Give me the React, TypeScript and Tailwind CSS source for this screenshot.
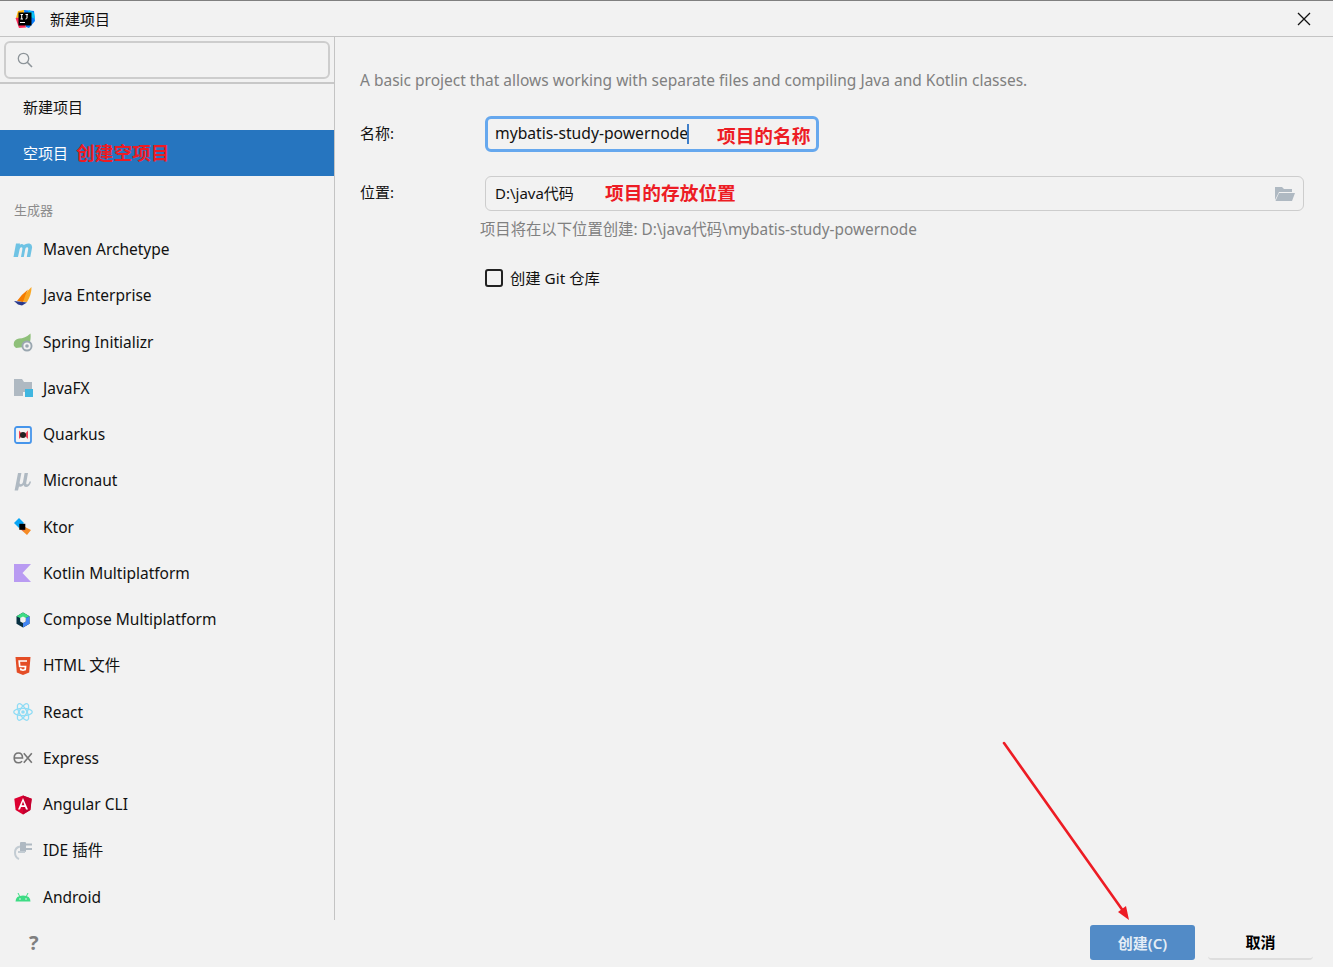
import React from "react";

const font = { fontFamily: '"Noto Sans","Noto Sans CJK SC",sans-serif' };

const Ico = ({ children }: { children: React.ReactNode }) => (
  <svg width="20" height="20" viewBox="0 0 20 20" className="shrink-0">{children}</svg>
);

const items: [string, React.ReactNode][] = [
  ["Maven Archetype", <Ico><path d="M0.5 17 L3 3.5 H7 L6.8 4.8 Q9 3 10.8 5 Q13.5 3 16.5 3.6 Q19.6 4.5 19 8 L17.3 17 H13.8 L15.2 9 Q15.4 7.2 14 7.2 Q12.6 7.2 12.3 9 L10.8 17 H8 L9.4 9 Q9.6 7.2 8.4 7.2 Q7 7.2 6.7 9 L5 17 Z" fill="#6fc3e4" /></Ico>],
  ["Java Enterprise", <Ico><path d="M18.5 1 Q18.5 9 14 16 L8 15.5 Q12 7 18.5 1Z" fill="#f9a825" /><path d="M15 3.5 Q9 8 4 15 L10 16 Q12 9 15 3.5Z" fill="#f57c00" /><path d="M1 15 L14 16.5 L9 19.5 L5 18.4Z" fill="#2a3a8c" /></Ico>],
  ["Spring Initializr", <Ico><path d="M1 14 Q-0.5 8 6 6.5 Q12 6.5 17.5 1.5 Q18 6 17 10 L11 15 L3 16Z" fill="#8fc07a" /><circle cx="14" cy="14" r="5.5" fill="#9aa7b0" /><circle cx="14" cy="14" r="3.6" fill="#f2f2f2" /><circle cx="14" cy="14" r="1.8" fill="#9aa7b0" /></Ico>],
  ["JavaFX", <Ico><path d="M1 1 H9 L11 4 H19 V14 H10 V18 H1Z" fill="#afb9c2" /><rect x="12" y="11" width="8" height="8" fill="#40b6e0" /></Ico>],
  ["Quarkus", <Ico><rect x="2" y="2" width="16" height="16" rx="2" fill="none" stroke="#4695eb" strokeWidth="1.8" /><path d="M3 10 L10 3 L17 10 L10 17Z" fill="#f2f2f2" /><path d="M6 5.5 L10 10 L6 14Z" fill="#ef4056" /><path d="M15 5.5 L11 10 L15 14Z" fill="#ef4056" /><circle cx="10" cy="10" r="3" fill="#222" /></Ico>],
  ["Micronaut", <Ico><path d="M5 2 H8.4 L6.6 11.5 Q6.4 13.5 8 13.3 Q9.6 13 10 11 L11.6 2 H15 L13.2 12 Q13 13.4 14 13.4 Q15.6 13.4 17 10 L18 11 Q16.5 16 13 16 Q11 16 10.6 14 Q8.5 16.5 6 15.4 L5 19.5 H1.6Z" fill="#afb9c2" /></Ico>],
  ["Ktor", <Ico><path d="M1 6 L6 1 L11 6 L6 11Z" fill="#08a5f5" /><path d="M9 8 L13 10.5 L18 13 L14 18 L6 11Z" fill="#f58a25" /><path d="M7 8 L12 8 L12 12 L10 14Z" fill="#d0457f" /><rect x="6.3" y="6.8" width="6" height="6" fill="#000" /></Ico>],
  ["Kotlin Multiplatform", <Ico><path d="M1 1 H18 L9.5 10 L18 19 H1Z" fill="#b99bf2" /></Ico>],
  ["Compose Multiplatform", <Ico><path d="M10 2.5 L16.5 6.2 V13.8 L10 17.5 L3.5 13.8 V6.2Z" fill="#083042" /><path d="M3.5 6.2 L10 2.5 L16.5 6.2 L10 9.5Z" fill="#3ddc84" /><path d="M16.5 6.2 V13.8 L10 17.5 V13 L13 11.5 V8Z" fill="#4285f4" /><path d="M7.2 8 L10 6.5 L12.8 8 V11.5 L10 13 L7.2 11.5Z" fill="#f2f2f2" /></Ico>],
  ["HTML 文件", <Ico><path d="M2.5 1 H17.5 L16.2 16.5 L10 19 L3.8 16.5Z" fill="#e44d26" /><path d="M14 5 H6.2 L6.7 10.5 H12.5 L12.2 13.5 L10 14.2 L7.8 13.5 L7.7 12.3" fill="none" stroke="#fff" strokeWidth="1.7" /></Ico>],
  ["React", <Ico><g fill="none" stroke="#8fdcf5" strokeWidth="1.3"><ellipse cx="10" cy="10" rx="9.3" ry="3.7" /><ellipse cx="10" cy="10" rx="9.3" ry="3.7" transform="rotate(60 10 10)" /><ellipse cx="10" cy="10" rx="9.3" ry="3.7" transform="rotate(120 10 10)" /></g><circle cx="10" cy="10" r="1.8" fill="#8fdcf5" /></Ico>],
  ["Express", <Ico><g fill="none" stroke="#757575" strokeWidth="1.6"><path d="M1.5 10 H9.5 Q9.5 5 5.5 5 Q1.2 5 1.2 10 Q1.2 14.8 5.5 14.8 Q8 14.8 9 13.2" /><path d="M10.8 5.2 L18.8 14.8 M18.8 5.2 L10.8 14.8" /></g></Ico>],
  ["Angular CLI", <Ico><path d="M10 0.5 L18.7 3.7 L17.4 15 L10 19.5 L2.6 15 L1.3 3.7Z" fill="#dd0031" /><path d="M10 0.5 L18.7 3.7 L17.4 15 L10 19.5Z" fill="#c3002f" /><path d="M10 3 L5 14.5 H7 L8 12 H12 L13 14.5 H15 Z M10 6.5 L11.4 10.2 H8.6Z" fill="#fff" fillRule="evenodd" /></Ico>],
  ["IDE 插件", <Ico><rect x="7" y="1" width="6" height="10" rx="1" fill="#afb9c2" /><rect x="13" y="2.5" width="6" height="2" fill="#afb9c2" /><rect x="13" y="7" width="6" height="2" fill="#afb9c2" /><path d="M7 5.5 Q2 6.5 2 11.5 Q2 16.5 6 18" fill="none" stroke="#c3ccd3" strokeWidth="2" /><path d="M5 11 H12" stroke="#c3ccd3" strokeWidth="2" /></Ico>],
  ["Android", <Ico><path d="M2.5 14.5 Q2.5 8.5 10 8.5 Q17.5 8.5 17.5 14.5Z" fill="#3ddc84" /><path d="M5 6 L7 10 M15 6 L13 10" stroke="#3ddc84" strokeWidth="1" /><circle cx="7" cy="12" r="0.8" fill="#f2f2f2" /><circle cx="13" cy="12" r="0.8" fill="#f2f2f2" /></Ico>],
];

const Red = ({ className, children }: { className: string; children: React.ReactNode }) => (
  <span className={`absolute font-bold text-[18.7px] leading-[26px] text-[#ed1c24] whitespace-nowrap ${className}`}>{children}</span>
);

export default function App() {
  return (
    <div style={font} className="relative w-[1333px] h-[967px] overflow-hidden bg-[#f2f2f2] text-[15.5px] text-[#111] flex flex-col border-t border-[#808080]">
      <header className="h-[36px] shrink-0 flex items-center border-b border-[#c4c4c4] pl-[15px] pr-[22px]">
        <svg width="20" height="20" viewBox="0 0 20 20" className="shrink-0">
          <path d="M3 2 L9 1 L8 8 L1 9Z" fill="#fdb60d" />
          <path d="M0.5 9 L4 19 L11 18.5 L8 8Z" fill="#fe2857" />
          <path d="M9 1 L19 2 L20 12 L14 19 L11 18Z" fill="#087cfa" />
          <path d="M14 1 L19 4 L20 10 L12 6Z" fill="#07c3f2" />
          <rect x="3.5" y="3.5" width="13" height="13" fill="#000" />
          <rect x="5" y="13" width="5" height="1" fill="#fff" />
          <path d="M5.5 5.5 H8 M6.7 5.5 V10 M5.5 10 H8 M10.5 5.5 H13 M12 5.5 V9 Q12 10 10.5 10" stroke="#fff" strokeWidth="1" fill="none" />
        </svg>
        <span className="ml-[15px] text-[15px] translate-y-[0.5px]">新建项目</span>
        <svg width="14" height="14" viewBox="0 0 14 14" className="ml-auto">
          <path d="M1 1 L13 13 M13 1 L1 13" stroke="#111" strokeWidth="1.3" />
        </svg>
      </header>

      <div className="flex flex-1 min-h-0">
        <aside className="w-[335px] shrink-0 h-[883px] border-r border-[#c4c4c4] flex flex-col">
          <div className="h-[47px] shrink-0 border-b-2 border-[#c8c8c8] pt-[4px] px-[4px]">
            <div className="h-[38px] rounded-[6px] border-2 border-[#cdcdcd] flex items-center pl-[11px]">
              <svg width="16" height="16" viewBox="0 0 16 16">
                <circle cx="6.5" cy="6.5" r="5.2" fill="none" stroke="#8d9499" strokeWidth="1.3" />
                <path d="M10.3 10.3 L15 15" stroke="#8d9499" strokeWidth="1.6" />
              </svg>
            </div>
          </div>
          <div className="h-[46px] shrink-0 flex items-center pl-[23px] text-[15px]">新建项目</div>
          <div className="h-[46px] shrink-0 bg-[#2675bf] flex items-center pl-[23px] text-[15px] text-white">
            空项目
            <span className="ml-[8px] font-bold text-[18.7px] text-[#ed1c24] leading-[26px]">创建空项目</span>
          </div>
          <div className="h-[50.6px] shrink-0 flex items-end pb-[6.6px] pl-[14px] text-[13px] text-[#8c8c8c]">生成器</div>
          {items.map(([label, icon]) => (
            <div key={label} className="h-[46.25px] shrink-0 flex items-center pl-[13px] gap-[10px]">
              {icon}
              <span className="whitespace-nowrap">{label}</span>
            </div>
          ))}
        </aside>

        <main className="relative flex-1 pl-[25px] pr-[29px] pt-[32px]">
          <p className="text-[#808080] h-[22px] leading-[22px] whitespace-nowrap">A basic project that allows working with separate files and compiling Java and Kotlin classes.</p>
          <div className="flex items-center mt-[25px]">
            <label className="w-[125px] text-[15px] -translate-y-[1px]">名称:</label>
            <div className="w-[334px] h-[36px] rounded-[6px] border-[3px] border-[#66a8ee] flex items-center pl-[7px] text-[15.7px]">
              <span className="whitespace-nowrap">mybatis-study-powernode</span>
              <span className="w-[2px] h-[20px] bg-[#3f7fc9] -ml-[1px]" />
            </div>
          </div>
          <div className="flex items-center mt-[24px]">
            <label className="w-[125px] text-[15px] -translate-y-[1px]">位置:</label>
            <div className="flex-1 h-[35px] rounded-[6px] border-[1.5px] border-[#cdcdcd] flex items-center pl-[9px] pr-[8px]">
              <span className="text-[15px] -translate-y-[0.5px]">D:\java代码</span>
              <svg width="20" height="16" viewBox="0 0 20 16" className="ml-auto">
                <path d="M0 14 V1 H7 L9 3 H17 V6 H4Z" fill="#afb9c2" />
                <path d="M4 7 H20 L17 15 H0.5Z" fill="#afb9c2" />
              </svg>
            </div>
          </div>
          <p className="ml-[120px] mt-[7px] text-[#808080] text-[15.35px] leading-[22px] whitespace-nowrap">项目将在以下位置创建: D:\java代码\mybatis-study-powernode</p>
          <div className="ml-[125px] mt-[27px] flex items-center gap-[7px]">
            <span className="w-[18px] h-[18px] rounded-[3px] border-2 border-[#222]" />
            <span className="text-[15.3px]">创建 Git 仓库</span>
          </div>
          <Red className="left-[382px] top-[86px]">项目的名称</Red>
          <Red className="left-[270px] top-[143px]">项目的存放位置</Red>
        </main>
      </div>

      <footer className="absolute left-0 right-0 bottom-0 h-[47px] flex items-start pl-[29px] pr-[20px] pt-[5px]">
        <span className="text-[#7f7f7f] text-[20px] font-bold leading-[36px]">?</span>
        <button className="ml-auto w-[105px] h-[35px] pt-[1px] rounded-[3px] bg-[#528bc7] text-[#e4edf6] text-[15px] font-semibold">创建(C)</button>
        <button className="ml-[13px] w-[105px] h-[35px] pt-[2px] rounded-[4px] bg-[#f2f2f2] border-b-2 border-[#dedede] text-[15px] font-bold text-black">取消</button>
      </footer>

      <svg width="140" height="190" viewBox="0 0 140 190" className="absolute left-[1000px] top-[738px]">
        <path d="M4 4 L126 176" stroke="#ed1c24" strokeWidth="2.6" strokeLinecap="round" />
        <path d="M129 181 L118 173 L126 167Z" fill="#ed1c24" />
      </svg>
    </div>
  );
}
